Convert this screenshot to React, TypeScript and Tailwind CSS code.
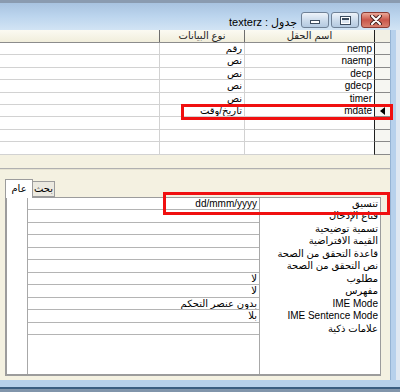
const fields = [
  { name: 'nemp', type: 'رقم' },
  { name: 'naemp', type: 'نص' },
  { name: 'decp', type: 'نص' },
  { name: 'gdecp', type: 'نص' },
  { name: 'timer', type: 'نص' },
  { name: 'mdate', type: 'تاريخ/وقت', current: true },
  { name: '', type: '' },
  { name: '', type: '' },
  { name: '', type: '' },
];

const props = [
  { label: 'تنسيق', value: 'dd/mmm/yyyy' },
  { label: 'قناع الإدخال', value: '' },
  { label: 'تسمية توضيحية', value: '' },
  { label: 'القيمة الافتراضية', value: '' },
  { label: 'قاعدة التحقق من الصحة', value: '' },
  { label: 'نص التحقق من الصحة', value: '' },
  { label: 'مطلوب', value: 'لا' },
  { label: 'مفهرس', value: 'لا' },
  { label: 'IME Mode', value: 'بدون عنصر التحكم' },
  { label: 'IME Sentence Mode', value: 'بلا' },
  { label: 'علامات ذكية', value: '' },
];

const font = { fontFamily: '"Liberation Sans", "DejaVu Sans", sans-serif' };

const TitleBar = () => (
  <div className="h-[30px] shrink-0 border-t-[3px] border-[#8a9bb0] bg-gradient-to-b from-[#a8c3e0] via-[#bcd5ee] to-[#d2e4f4] flex justify-end items-start pr-[10px]">
    <div className="mt-[13px] mr-[4px] flex gap-[3px] text-[11px] leading-[13px] text-black">
      <span>texterz</span>
      <span>:</span>
      <span dir="rtl">جدول</span>
    </div>
    <div className="flex gap-[2px] mt-[9px]">
      <button className="w-[28px] h-[16px] rounded-[3px] border border-[#6f8196] bg-gradient-to-b from-[#eef4fa] via-[#cddcec] to-[#b3c9e0] flex items-end justify-center pb-[3px]">
        <span className="block w-[10px] h-[4px] bg-white border border-[#3c4c5e]" />
      </button>
      <button className="w-[28px] h-[16px] rounded-[3px] border border-[#6f8196] bg-gradient-to-b from-[#eef4fa] via-[#cddcec] to-[#b3c9e0] flex items-center justify-center">
        <span className="block w-[11px] h-[9px] border border-[#3c4c5e] bg-white p-[1px]">
          <span className="block w-full h-full border-t-2 border-[#3c4c5e] bg-[#dce6f0]" />
        </span>
      </button>
      <button className="w-[29px] h-[16px] rounded-[3px] border border-[#8a3b34] bg-gradient-to-b from-[#eaa898] via-[#c9564a] to-[#d8806f] flex items-center justify-center">
        <svg width="12" height="10" viewBox="0 0 12 10">
          <path d="M2 1 L10 9 M10 1 L2 9" stroke="#4a2420" strokeWidth="4" strokeLinecap="round" />
          <path d="M2 1 L10 9 M10 1 L2 9" stroke="#ffffff" strokeWidth="2" strokeLinecap="round" />
        </svg>
      </button>
    </div>
  </div>
);

const FieldGrid = () => (
  <div className="relative bg-white">
    <div className="flex h-[13px] bg-gradient-to-b from-[#fbfaf2] to-[#f1eedc] border-b border-[#8c8c8c] text-[10px] leading-[12px] text-[#222]">
      <div className="w-[160px] border-r border-[#6e6e6e]" />
      <div dir="rtl" className="w-[85px] border-r border-[#6e6e6e] text-center">نوع البيانات</div>
      <div dir="rtl" className="w-[129px] text-center">اسم الحقل</div>
      <div className="w-[16px] border-l border-[#202020] bg-[#f2f0e4]" />
    </div>
    {fields.map((f, i) => (
      <div key={i} className="flex h-[12.4px] text-[10px] leading-[11px] text-black">
        <div className="w-[160px] border-r border-b border-[#d2d2d2]" />
        <div dir="rtl" className="w-[85px] border-r border-b border-[#d2d2d2] pr-[2px] whitespace-nowrap overflow-hidden">{f.type}</div>
        <div className="w-[129px] border-b border-[#d2d2d2] pr-[2px] text-right">{f.name}</div>
        <div className="w-[16px] border-l border-[#202020] border-b border-b-[#8a8a8a] bg-[#f6f6f2] flex items-center justify-center">
          {f.current && (
            <svg width="5" height="8" viewBox="0 0 5 8">
              <polygon points="5,0 5,8 0,4" fill="#000" />
            </svg>
          )}
        </div>
      </div>
    ))}
    <div className="absolute left-[181px] top-[74px] w-[212px] h-[16px] border-[3px] border-[#f01010]" />
  </div>
);

const PropertyPanel = () => (
  <div className="relative pl-[5px] pt-[9px] pr-[9px]">
    <div className="flex items-end h-[18px]">
      <div dir="rtl" className="relative z-10 w-[28px] h-[19px] -mb-px bg-white border border-b-0 border-[#9c9c9c] text-[10px] leading-[12px] text-center pt-[3px]">عام</div>
      <div dir="rtl" className="w-[22px] h-[16px] bg-[#ebe9e0] border border-l-0 border-[#9c9c9c] text-[10px] leading-[12px] text-center pt-[1px]">بحث</div>
    </div>
    <div className="h-[179px] bg-white border border-[#9c9c9c] border-l-2 border-b-2 flex">
      <div className="ml-[20px] w-[233px] border-l border-r border-[#a8a8a8]">
        {props.map((p, i) => (
          <div key={i} dir="rtl" className="h-[12.5px] border-b border-[#b4b4b4] pr-[2px] text-[10px] leading-[12px] text-black whitespace-nowrap overflow-hidden">
            {p.value}
          </div>
        ))}
      </div>
      <div className="flex-1 pr-[2px]">
        {props.map((p, i) => (
          <div key={i} dir="rtl" className="h-[12.5px] text-[10px] leading-[12px] text-black whitespace-nowrap">
            {p.label}
          </div>
        ))}
      </div>
    </div>
    <div className="absolute left-[163px] top-[22px] w-[227px] h-[23px] border-[3px] border-[#f01010]" />
  </div>
);

export default function App() {
  return (
    <div className="w-[400px] h-[392px] overflow-hidden flex flex-col bg-[#7d92a8]" style={font}>
      <TitleBar />
      <div className="flex h-[350px]">
        <div className="w-[390px] bg-[#f4f1e1] flex flex-col">
          <FieldGrid />
          <div className="h-[13px]" />
          <div className="h-[2px] border-t border-[#b0b0b0] bg-[#e6e3d2]" />
          <PropertyPanel />
        </div>
        <div className="w-[10px] flex">
          <div className="w-[6px] border-l border-[#96b4d4] bg-[#b7d1ec]" />
          <div className="w-[4px] bg-[#dfe8f2]" />
        </div>
      </div>
      <div className="h-[12px] flex flex-col">
        <div className="h-[7px] bg-[#b6d0ea]" />
        <div className="h-[2px] bg-[#3a5d80]" />
        <div className="flex-1 bg-[#8195ab]" />
      </div>
    </div>
  );
}
